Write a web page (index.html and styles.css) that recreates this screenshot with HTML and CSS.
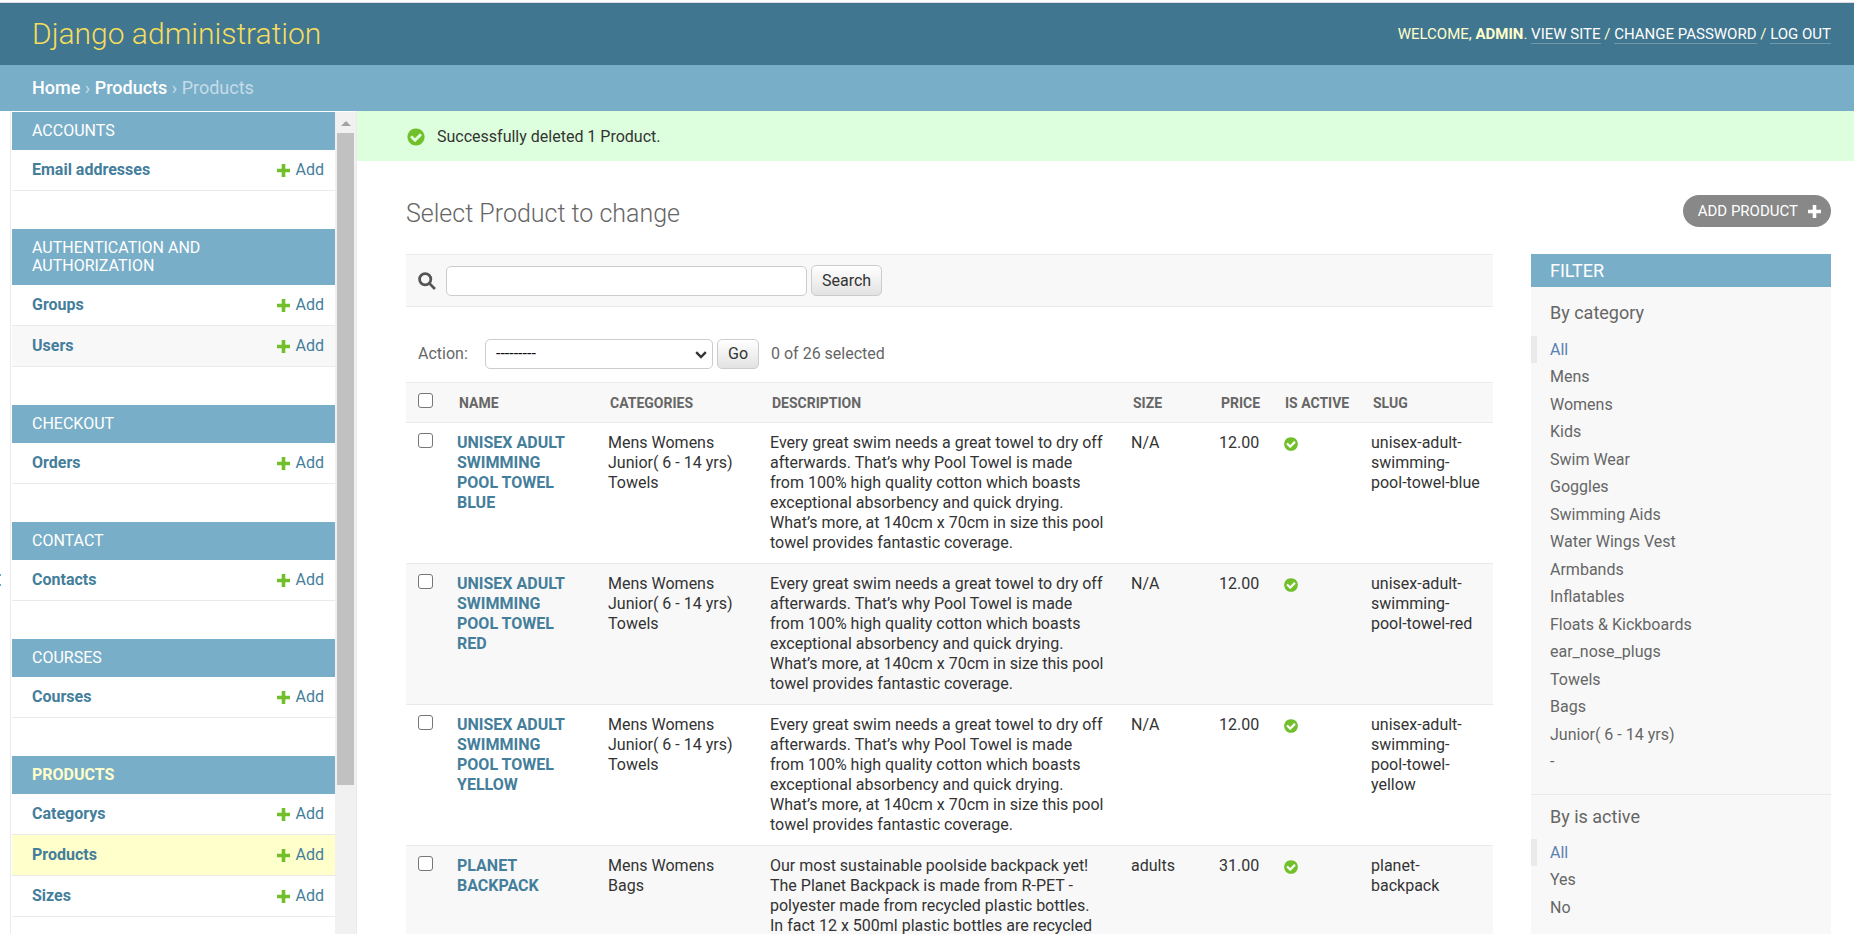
FILE: index.html
```html
<!DOCTYPE html>
<html lang="en">
<head>
<meta charset="utf-8">
<title>Select Product to change | Django site admin</title>
<link rel="stylesheet" href="styles.css">
</head>
<body>
<svg class="sprite" aria-hidden="true">
  <symbol id="plus" viewBox="0 0 13 13"><path d="M4.7 0h3.6v4.7H13v3.6H8.3V13H4.7V8.3H0V4.7h4.7z"/></symbol>
  <symbol id="tick" viewBox="0 0 1792 1792"><path d="M1412 734q0-28-18-46l-91-90q-19-19-45-19t-45 19l-408 407-226-226q-19-19-45-19t-45 19l-91 90q-18 18-18 46 0 27 18 45l362 362q19 19 45 19 27 0 46-19l543-543q18-18 18-45zm252 162q0 209-103 385.500t-279.500 279.500-385.500 103-385.500-103-279.500-279.500-103-385.500 103-385.500 279.500-279.500 385.500-103 385.500 103 279.500 279.500 103 385.500z"/></symbol>
</svg>
<header class="header">
  <h1 class="brand"><a href="#">Django administration</a></h1>
  <div class="user-tools">Welcome, <strong>admin</strong>. <a href="#">View site</a> / <a href="#">Change password</a> / <a href="#">Log out</a></div>
</header>
<nav class="breadcrumbs"><a href="#">Home</a> › <a href="#">Products</a> › Products</nav>
<div class="main">
  <div class="toggle" aria-hidden="true"><span class="toggle-mark"></span></div>
  <nav class="sidebar">
    <div class="apps">
      <section class="app"><h2>Accounts</h2>
        <div class="model"><a class="model-name" href="#">Email addresses</a><a class="add" href="#"><svg><use href="#plus"/></svg>Add</a></div>
      </section>
      <section class="app"><h2>Authentication and Authorization</h2>
        <div class="model"><a class="model-name" href="#">Groups</a><a class="add" href="#"><svg><use href="#plus"/></svg>Add</a></div>
        <div class="model alt"><a class="model-name" href="#">Users</a><a class="add" href="#"><svg><use href="#plus"/></svg>Add</a></div>
      </section>
      <section class="app"><h2>Checkout</h2>
        <div class="model"><a class="model-name" href="#">Orders</a><a class="add" href="#"><svg><use href="#plus"/></svg>Add</a></div>
      </section>
      <section class="app"><h2>Contact</h2>
        <div class="model"><a class="model-name" href="#">Contacts</a><a class="add" href="#"><svg><use href="#plus"/></svg>Add</a></div>
      </section>
      <section class="app"><h2>Courses</h2>
        <div class="model"><a class="model-name" href="#">Courses</a><a class="add" href="#"><svg><use href="#plus"/></svg>Add</a></div>
      </section>
      <section class="app current"><h2>Products</h2>
        <div class="model"><a class="model-name" href="#">Categorys</a><a class="add" href="#"><svg><use href="#plus"/></svg>Add</a></div>
        <div class="model selected"><a class="model-name" href="#">Products</a><a class="add" href="#"><svg><use href="#plus"/></svg>Add</a></div>
        <div class="model"><a class="model-name" href="#">Sizes</a><a class="add" href="#"><svg><use href="#plus"/></svg>Add</a></div>
      </section>
    </div>
    <div class="scrollbar" aria-hidden="true"><svg viewBox="0 0 10 5"><path d="M5 0l5 5H0z"/></svg><div class="thumb"></div></div>
  </nav>
  <main class="content">
    <p class="message"><svg><use href="#tick"/></svg>Successfully deleted 1 Product.</p>
    <div class="title-row">
      <h1>Select Product to change</h1>
      <a class="add-product" href="#">Add Product<svg><use href="#plus"/></svg></a>
    </div>
    <div class="columns">
      <div class="changelist">
        <form class="search">
          <label for="q" aria-label="Search"><svg viewBox="0 0 17 17"><circle cx="6.800" cy="6.800" r="5.300"/><path d="M11 11l5 5"/></svg></label>
          <input id="q" type="text">
          <button type="button">Search</button>
        </form>
        <div class="actions">
          <label for="action">Action:</label>
          <span class="select-wrap"><select id="action"><option>---------</option></select><svg viewBox="0 0 12 8"><path d="M1.200 1.200L6 6l4.800-4.800"/></svg></span>
          <button type="button">Go</button>
          <span class="count">0 of 26 selected</span>
        </div>
        <table>
          <colgroup><col class="c-check"><col class="c-name"><col class="c-cat"><col><col class="c-size"><col class="c-price"><col class="c-active"><col class="c-slug"></colgroup>
          <thead><tr><th><input type="checkbox" aria-label="Select all"></th><th>Name</th><th>Categories</th><th>Description</th><th>Size</th><th>Price</th><th>Is active</th><th>Slug</th></tr></thead>
          <tbody>
            <tr><td><input type="checkbox" aria-label="Select row"></td><th><a href="#">UNISEX ADULT SWIMMING POOL TOWEL BLUE</a></th><td>Mens Womens Junior( 6 - 14 yrs) Towels</td><td class="description">Every great swim needs a great towel to dry off afterwards. That’s why Pool Towel is made from 100% high quality cotton which boasts exceptional absorbency and quick drying. What’s more, at 140cm x 70cm in size this pool towel provides fantastic coverage.</td><td>N/A</td><td>12.00</td><td><svg><use href="#tick"/></svg></td><td>unisex-adult-swimming-pool-towel-blue</td></tr>
            <tr><td><input type="checkbox" aria-label="Select row"></td><th><a href="#">UNISEX ADULT SWIMMING POOL TOWEL RED</a></th><td>Mens Womens Junior( 6 - 14 yrs) Towels</td><td class="description">Every great swim needs a great towel to dry off afterwards. That’s why Pool Towel is made from 100% high quality cotton which boasts exceptional absorbency and quick drying. What’s more, at 140cm x 70cm in size this pool towel provides fantastic coverage.</td><td>N/A</td><td>12.00</td><td><svg><use href="#tick"/></svg></td><td>unisex-adult-swimming-pool-towel-red</td></tr>
            <tr><td><input type="checkbox" aria-label="Select row"></td><th><a href="#">UNISEX ADULT SWIMMING POOL TOWEL YELLOW</a></th><td>Mens Womens Junior( 6 - 14 yrs) Towels</td><td class="description">Every great swim needs a great towel to dry off afterwards. That’s why Pool Towel is made from 100% high quality cotton which boasts exceptional absorbency and quick drying. What’s more, at 140cm x 70cm in size this pool towel provides fantastic coverage.</td><td>N/A</td><td>12.00</td><td><svg><use href="#tick"/></svg></td><td>unisex-adult-swimming-pool-towel-yellow</td></tr>
            <tr><td><input type="checkbox" aria-label="Select row"></td><th><a href="#">PLANET BACKPACK</a></th><td>Mens Womens Bags</td><td class="description">Our most sustainable poolside backpack yet! The Planet Backpack is made from R-PET - polyester made from recycled plastic bottles. In fact 12 x 500ml plastic bottles are recycled</td><td>adults</td><td>31.00</td><td><svg><use href="#tick"/></svg></td><td>planet-backpack</td></tr>
          </tbody>
        </table>
      </div>
      <aside class="filter">
        <h2>Filter</h2>
        <h3>By category</h3>
        <ul>
          <li class="selected"><a href="#">All</a></li><li><a href="#">Mens</a></li><li><a href="#">Womens</a></li><li><a href="#">Kids</a></li><li><a href="#">Swim Wear</a></li><li><a href="#">Goggles</a></li><li><a href="#">Swimming Aids</a></li><li><a href="#">Water Wings Vest</a></li><li><a href="#">Armbands</a></li><li><a href="#">Inflatables</a></li><li><a href="#">Floats &amp; Kickboards</a></li><li><a href="#">ear_nose_plugs</a></li><li><a href="#">Towels</a></li><li><a href="#">Bags</a></li><li><a href="#">Junior( 6 - 14 yrs)</a></li><li><a href="#">-</a></li>
        </ul>
        <h3>By is active</h3>
        <ul>
          <li class="selected"><a href="#">All</a></li><li><a href="#">Yes</a></li><li><a href="#">No</a></li>
        </ul>
      </aside>
    </div>
  </main>
</div>
</body>
</html>
```
FILE: styles.css
```css
* { box-sizing: border-box; }
body {
  margin: 0;
  height: 100vh;
  overflow: hidden;
  display: flex;
  flex-direction: column;
  background: #fff;
  border-top: 2px solid #fff;
  color: #333;
  font: 16px/20px Roboto, "Liberation Sans", sans-serif;
}
h1, h2, h3, p, ul { margin: 0; padding: 0; font-weight: 400; }
ul { list-style: none; }
a { color: #447e9b; text-decoration: none; }
.sprite { display: none; }

.header {
  flex: none;
  display: flex;
  justify-content: space-between;
  align-items: center;
  height: 63px;
  padding: 0 23px 0 32px;
  border-top: 1px solid #dcdce2;
  background: #417690;
  color: #ffc;
}
.brand { font-size: 30px; line-height: 36px; font-weight: 300; }
.brand a { color: #f5dd5d; }
.user-tools { font-size: 15px; line-height: 18px; text-transform: uppercase; }
.user-tools a { color: #fff; border-bottom: 1px solid #7198ab; }
.breadcrumbs {
  flex: none;
  padding: 13px 32px;
  background: #79aec8;
  color: #c4dce8;
  font-size: 18px;
}
.breadcrumbs a { color: #fff; font-weight: 500; }

.main { flex: 1; min-height: 0; display: flex; }
.toggle {
  flex: none;
  display: flex;
  width: 11px;
  padding-top: 463px;
  border-right: 1px solid #eaeaea;
}
.toggle-mark { width: 1px; height: 12px; border: solid #5aa9cf; border-width: 2px 0; }
.sidebar {
  flex: none;
  display: flex;
  width: 346px;
  padding: 1px 0 0 1px;
  border-right: 1px solid #eaeaea;
}
.apps { flex: 1; display: flex; flex-direction: column; gap: 38px; overflow: hidden; }
.app h2 {
  padding: 10px 40px 10px 20px;
  background: #79aec8;
  color: #fff;
  font-size: 16px;
  line-height: 18px;
  text-transform: uppercase;
}
.app.current h2 { color: #ffc; font-weight: 700; }
.model {
  display: flex;
  justify-content: space-between;
  padding: 10px 11px 10px 20px;
  border-bottom: 1px solid #eaeaea;
}
.model.alt { background: #f8f8f8; }
.model.selected { background: #ffc; }
.model-name { font-weight: 700; }
.add { display: flex; align-items: center; gap: 6px; }
.add svg { width: 13px; height: 13px; fill: #70bf2b; }
.scrollbar {
  width: 21px;
  display: flex;
  flex-direction: column;
  align-items: flex-start;
  padding: 9px 0 0 2px;
  background: #f1f1f1;
}
.scrollbar svg { width: 10px; height: 5px; margin: 0 0 7px 4px; fill: #a3a3a3; }
.thumb { width: 17px; height: 652px; background: #c1c1c1; }

.content { flex: 1; min-width: 0; }
.message {
  display: flex;
  align-items: center;
  gap: 11px;
  padding: 16px 49px 14px;
  background: #dfd;
}
.message svg { width: 20px; height: 20px; fill: #70bf2b; }
.title-row {
  display: flex;
  justify-content: space-between;
  align-items: flex-start;
  padding: 34px 23px 27px 49px;
}
.title-row h1 { padding-top: 6px; color: #666; font-size: 25px; line-height: 26px; font-weight: 300; }
.add-product {
  display: flex;
  align-items: center;
  gap: 10px;
  padding: 7px 10px 7px 15px;
  border-radius: 16px;
  background: #888;
  color: #fff;
  font-size: 15px;
  line-height: 18px;
  text-transform: uppercase;
}
.add-product svg { width: 13px; height: 13px; fill: #fff; }

.columns { display: flex; gap: 38px; padding: 0 23px 0 49px; }
.changelist { flex: 1; min-width: 0; }
button {
  height: 31px;
  padding: 0 10px;
  border: 1px solid #ccc;
  border-radius: 5px;
  background: linear-gradient(#fff, #e2e2e2);
  color: #333;
  font: inherit;
}
.search {
  display: flex;
  align-items: center;
  gap: 4px;
  padding: 10px 12px;
  border: solid #eaeaea;
  border-width: 1px 0;
  background: #f8f8f8;
}
.search label { width: 24px; display: flex; }
.search svg { width: 18px; height: 18px; fill: none; stroke: #555; stroke-width: 2.600; }
.search input {
  width: 361px;
  height: 30px;
  padding: 5px 8px;
  border: 1px solid #ccc;
  border-radius: 5px;
  background: #fff;
  font: inherit;
}
.actions {
  display: flex;
  align-items: center;
  gap: 4px;
  padding: 32px 12px 13px;
  color: #666;
}
.actions label { width: 63px; }
.actions button { height: 30px; }
.select-wrap { position: relative; display: flex; }
.select-wrap select {
  appearance: none;
  width: 228px;
  height: 30px;
  padding: 0 10px;
  border: 1px solid #ccc;
  border-radius: 5px;
  background: #fff;
  color: #111;
  font: inherit;
}
.select-wrap svg {
  position: absolute;
  right: 6px;
  top: 12px;
  width: 12px;
  height: 8px;
  fill: none;
  stroke: #333;
  stroke-width: 2.400;
  pointer-events: none;
}
.count { padding-left: 8px; }

table { width: 100%; table-layout: fixed; border-collapse: separate; border-spacing: 0; border-top: 1px solid #eaeaea; }
.c-check { width: 41px; }
.c-name { width: 151px; }
.c-cat { width: 162px; }
.c-size { width: 88px; }
.c-price { width: 64px; }
.c-active { width: 88px; }
.c-slug { width: 132px; }
th, td { padding: 10px; border-bottom: 1px solid #eaeaea; text-align: left; vertical-align: top; }
tbody th { padding-right: 20px; }
.description { padding-right: 16px; }
td:first-child, thead th:first-child { padding-left: 12px; }
thead th {
  padding: 10px 12px 9px;
  background: #f8f8f8;
  color: #666;
  font-size: 14px;
  font-weight: 700;
  text-transform: uppercase;
  white-space: nowrap;
}
tbody tr:nth-child(even) { background: #f8f8f8; }
td svg { display: block; width: 16px; height: 16px; margin-top: 3px; fill: #70bf2b; }
input[type="checkbox"] {
  appearance: none;
  display: block;
  width: 15px;
  height: 15px;
  margin: 0;
  border: 1px solid #767676;
  border-radius: 3px;
  background: #fff;
}

.filter { flex: none; width: 300px; background: #f8f8f8; color: #666; }
.filter h2 {
  padding: 7px 19px 6px;
  background: #79aec8;
  color: #fff;
  font-size: 18px;
  text-transform: uppercase;
}
.filter h3 { padding: 12px 19px; font-size: 18px; }
.filter h2 + h3 { padding: 16px 19px 13px; }
.filter ul { padding-bottom: 18px; border-bottom: 1px solid #eaeaea; }
.filter li { padding: 4px 13px 3px; border-left: 6px solid transparent; }
.filter li:nth-child(even) { padding-bottom: 4px; }
.filter li a { color: #666; }
.filter li.selected { border-left-color: #eaeaea; }
.filter li.selected a { color: #5b80b2; }
```
